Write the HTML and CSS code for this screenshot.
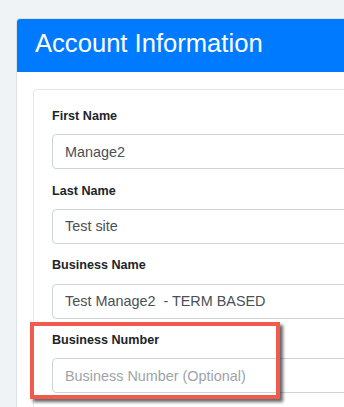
FILE: index.html
```html
<!DOCTYPE html>
<html lang="en">
<head>
<meta charset="utf-8">
<title>Account Information</title>
<link rel="stylesheet" href="styles.css">
</head>
<body>
<div class="page">
  <div class="card">
    <h2 class="card-header">Account Information</h2>
    <div class="card-body">
      <div class="inner-card">
        <div class="form-group">
          <label class="label" for="fn">First Name</label>
          <input class="input" id="fn" type="text" value="Manage2">
        </div>
        <div class="form-group">
          <label class="label" for="ln">Last Name</label>
          <input class="input" id="ln" type="text" value="Test site">
        </div>
        <div class="form-group">
          <label class="label" for="bn">Business Name</label>
          <input class="input" id="bn" type="text" value="Test Manage2  - TERM BASED">
        </div>
        <div class="form-group">
          <label class="label" for="bnum">Business Number</label>
          <input class="input" id="bnum" type="text" placeholder="Business Number (Optional)">
        </div>
      </div>
    </div>
  </div>
  <div class="highlight"></div>
</div>
</body>
</html>
```

FILE: styles.css
```css
html, body {
  margin: 0;
  padding: 0;
  background: #f0f3f6;
  overflow: hidden;
}
body {
  width: 344px;
  height: 407px;
  font-family: "Liberation Sans", Arial, sans-serif;
}
.page {
  position: relative;
  padding: 18px 0 0 16px;
  width: 700px;
}
.card {
  background: #ffffff;
  border: 1px solid #dde1e6;
  border-radius: 4px;
  overflow: hidden;
}
.card-header {
  margin: 0;
  height: 53px;
  box-sizing: border-box;
  padding: 9px 18px 0;
  background: #007bff;
  color: #ffffff;
  font-size: 25.6px;
  font-weight: normal;
  line-height: 1.25;
}
.card-body {
  padding: 17px 16px 16px;
}
.inner-card {
  border: 1px solid #e3e6ea;
  border-radius: 4px;
  padding: 17px 18px 6px;
}
.form-group {
  margin-bottom: 12.5px;
}
.label {
  display: block;
  font-size: 12.6px;
  line-height: 19.2px;
  font-weight: bold;
  color: #212529;
  margin-bottom: 8px;
}
.input {
  display: block;
  width: 100%;
  height: 35px;
  box-sizing: border-box;
  padding: 0 12px;
  border: 1px solid #ced4da;
  border-radius: 4px;
  background: #ffffff;
  font-family: "Liberation Sans", Arial, sans-serif;
  font-size: 14.4px;
  color: #495057;
  outline: none;
}
.input::placeholder {
  color: #9ea3a8;
  opacity: 1;
}
.highlight {
  position: absolute;
  left: 30px;
  top: 322px;
  width: 250px;
  height: 77px;
  box-sizing: border-box;
  border: 4px solid #f25a4e;
  box-shadow: 3px 3px 3px rgba(0, 0, 0, 0.6);
}
```
